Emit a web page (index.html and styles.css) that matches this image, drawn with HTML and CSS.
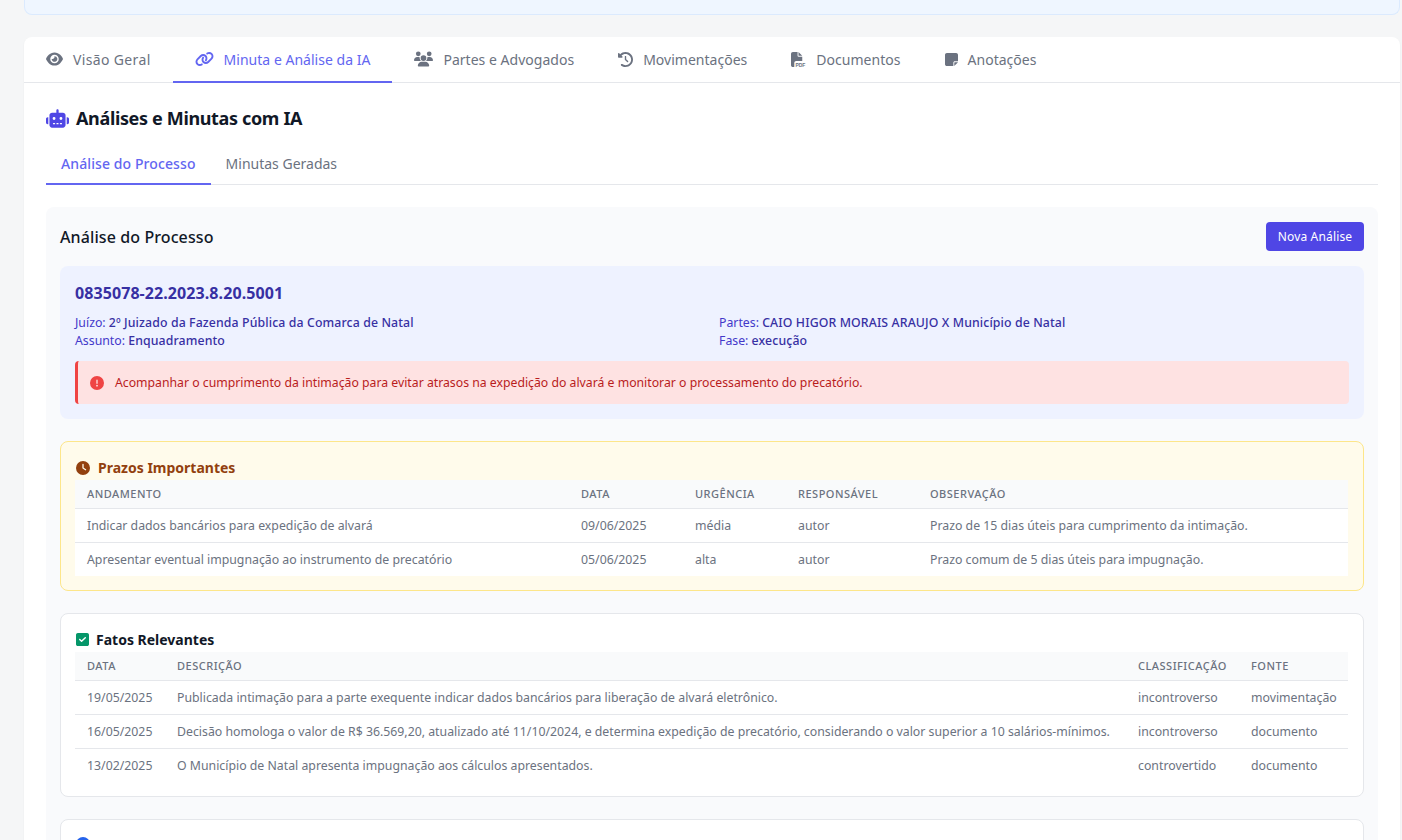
FILE: index.html
```html
<!DOCTYPE html>
<html lang="pt-BR">
<head>
    <meta charset="UTF-8">
    <meta name="viewport" content="width=device-width, initial-scale=1.0">
    <title>Análises e Minutas com IA</title>
    <link rel="stylesheet" href="styles.css">
</head>
<body>
    <div class="top-strip"></div>

    <main class="card">
        <nav class="tabs">
            <a class="tab">
                <svg class="tab-icon" width="17" height="16" viewBox="0 0 576 512"><path d="M288 32c-80.8 0-145.5 36.8-192.6 80.6C48.6 156 17.3 208 2.5 243.7c-3.3 7.9-3.3 16.7 0 24.6C17.3 304 48.6 356 95.4 399.4C142.5 443.2 207.2 480 288 480s145.5-36.8 192.6-80.6c46.8-43.5 78.1-95.4 93-131.1c3.3-7.9 3.3-16.7 0-24.6c-14.9-35.7-46.2-87.7-93-131.1C433.5 68.8 368.8 32 288 32zM144 256a144 144 0 1 1 288 0 144 144 0 1 1 -288 0zm144-64c0 35.3-28.7 64-64 64c-7.1 0-13.9-1.2-20.3-3.3c-5.5-1.8-11.9 1.6-11.7 7.4c.3 6.9 1.3 13.8 3.2 20.7c13.7 51.2 66.4 81.6 117.6 67.9s81.6-66.4 67.9-117.6c-11.1-41.5-47.8-69.4-88.6-71.1c-5.8-.2-9.2 6.1-7.4 11.7c2.1 6.4 3.3 13.2 3.3 20.3z"/></svg>
                Visão Geral
            </a>
            <a class="tab active">
                <svg class="tab-icon" width="19" height="16" viewBox="0 0 640 512"><path d="M579.8 267.7c56.5-56.5 56.5-148 0-204.5c-50-50-128.8-56.5-186.3-15.4l-1.6 1.1c-14.4 10.3-17.7 30.3-7.4 44.6s30.3 17.7 44.6 7.4l1.6-1.1c32.1-22.9 76-19.3 103.8 8.6c31.5 31.5 31.5 82.5 0 114L422.3 334.8c-31.5 31.5-82.5 31.5-114 0c-27.9-27.9-31.5-71.8-8.6-103.8l1.1-1.6c10.3-14.4 6.9-34.4-7.4-44.6s-34.4-6.9-44.6 7.4l-1.1 1.6C206.5 251.2 213 330 263 380c56.5 56.5 148 56.5 204.5 0L579.8 267.7zM60.2 244.3c-56.5 56.5-56.5 148 0 204.5c50 50 128.8 56.5 186.3 15.4l1.6-1.1c14.4-10.3 17.7-30.3 7.4-44.6s-30.3-17.7-44.6-7.4l-1.6 1.1c-32.1 22.9-76 19.3-103.8-8.6C74 372 74 321 105.5 289.5L217.7 177.2c31.5-31.5 82.5-31.5 114 0c27.9 27.9 31.5 71.8 8.6 103.9l-1.1 1.6c-10.3 14.4-6.9 34.4 7.4 44.6s34.4 6.9 44.6-7.4l1.1-1.6C433.5 260.8 427 182 377 132c-56.5-56.5-148-56.5-204.5 0L60.2 244.3z"/></svg>
                Minuta e Análise da IA
            </a>
            <a class="tab">
                <svg class="tab-icon" width="19" height="16" viewBox="0 0 640 512"><path d="M144 0a80 80 0 1 1 0 160A80 80 0 1 1 144 0zM512 0a80 80 0 1 1 0 160A80 80 0 1 1 512 0zM0 298.7C0 239.8 47.8 192 106.7 192h42.7c15.9 0 31 3.5 44.6 9.7c-1.3 7.2-1.9 14.7-1.9 22.3c0 38.2 16.8 72.5 43.3 96c-.2 0-.4 0-.7 0H21.3C9.6 320 0 310.4 0 298.7zM405.3 320c-.2 0-.4 0-.7 0c26.6-23.5 43.3-57.8 43.3-96c0-7.6-.7-15-1.9-22.3c13.6-6.3 28.7-9.7 44.6-9.7h42.7C592.2 192 640 239.8 640 298.7c0 11.8-9.6 21.3-21.3 21.3H405.3zM224 224a96 96 0 1 1 192 0 96 96 0 1 1 -192 0zM128 485.3C128 411.7 187.7 352 261.3 352H378.7C452.3 352 512 411.7 512 485.3c0 14.7-11.9 26.7-26.7 26.7H154.7c-14.7 0-26.7-11.9-26.7-26.7z"/></svg>
                Partes e Advogados
            </a>
            <a class="tab">
                <svg class="tab-icon" width="15" height="15" viewBox="0 0 512 512"><path d="M75 75L41 41C25.9 25.9 0 36.6 0 57.9V168c0 13.3 10.7 24 24 24H134.1c21.4 0 32.1-25.9 17-41l-30.8-30.8C155 85.5 203 64 256 64c106 0 192 86 192 192s-86 192-192 192c-40.8 0-78.6-12.7-109.7-34.4c-14.5-10.1-34.4-6.6-44.6 7.9s-6.6 34.4 7.9 44.6C151.2 495 201.7 512 256 512c141.4 0 256-114.6 256-256S397.4 0 256 0C185.3 0 121.3 28.7 75 75zm181 53c-13.3 0-24 10.7-24 24V256c0 6.4 2.5 12.5 7 17l72 72c9.4 9.4 24.6 9.4 33.9 0s9.4-24.6 0-33.9l-65-65V152c0-13.3-10.7-24-24-24z"/></svg>
                Movimentações
            </a>
            <a class="tab">
                <svg class="tab-icon" width="15" height="15" viewBox="0 0 512 512"><path d="M0 64C0 28.7 28.7 0 64 0H224V128c0 17.7 14.3 32 32 32H384V304H176c-35.3 0-64 28.7-64 64V512H64c-35.3 0-64-28.7-64-64V64zm384 64H256V0L384 128z"/><text x="150" y="500" font-size="170" font-weight="700" font-family="Liberation Sans, sans-serif">PDF</text></svg>
                Documentos
            </a>
            <a class="tab">
                <svg class="tab-icon" width="13" height="15" viewBox="0 0 448 512"><path d="M64 32C28.7 32 0 60.7 0 96V416c0 35.3 28.7 64 64 64H288V368c0-26.5 21.5-48 48-48H448V96c0-35.3-28.7-64-64-64H64zM448 352H402.7 336c-8.8 0-16 7.2-16 16v66.7V480l32-32 64-64 32-32z"/></svg>
                Anotações
            </a>
        </nav>

        <div class="card-body">
            <h2 class="page-title">
                <svg class="robot-icon" width="23" height="19" viewBox="0 0 640 512"><path d="M320 0c17.7 0 32 14.3 32 32V96H472c39.8 0 72 32.2 72 72V440c0 39.8-32.2 72-72 72H168c-39.8 0-72-32.2-72-72V168c0-39.8 32.2-72 72-72H288V32c0-17.7 14.3-32 32-32zM208 384c-8.8 0-16 7.2-16 16s7.2 16 16 16h32c8.8 0 16-7.2 16-16s-7.2-16-16-16H208zm96 0c-8.8 0-16 7.2-16 16s7.2 16 16 16h32c8.8 0 16-7.2 16-16s-7.2-16-16-16H304zm96 0c-8.8 0-16 7.2-16 16s7.2 16 16 16h32c8.8 0 16-7.2 16-16s-7.2-16-16-16H400zM264 256a40 40 0 1 0 -80 0 40 40 0 1 0 80 0zm152 40a40 40 0 1 0 0-80 40 40 0 1 0 0 80zM48 224H64V416H48c-26.5 0-48-21.5-48-48V272c0-26.5 21.5-48 48-48zm544 0c26.5 0 48 21.5 48 48v96c0 26.5-21.5 48-48 48H576V224h16z"/></svg>
                Análises e Minutas com IA
            </h2>

            <div class="subtabs">
                <a class="subtab active">Análise do Processo</a>
                <a class="subtab">Minutas Geradas</a>
            </div>

            <section class="panel">
                <div class="panel-head">
                    <h3>Análise do Processo</h3>
                    <button class="btn-primary">Nova Análise</button>
                </div>

                <div class="process-box">
                    <h4>0835078-22.2023.8.20.5001</h4>
                    <div class="process-info">
                        <div>
                            <p>Juízo: <strong>2º Juizado da Fazenda Pública da Comarca de Natal</strong></p>
                            <p>Assunto: <strong>Enquadramento</strong></p>
                        </div>
                        <div>
                            <p>Partes: <strong>CAIO HIGOR MORAIS ARAUJO X Município de Natal</strong></p>
                            <p>Fase: <strong>execução</strong></p>
                        </div>
                    </div>
                    <div class="alert">
                        <svg width="14" height="14" viewBox="0 0 512 512"><path d="M256 512A256 256 0 1 0 256 0a256 256 0 1 0 0 512zm0-384c13.3 0 24 10.7 24 24V264c0 13.3-10.7 24-24 24s-24-10.7-24-24V152c0-13.3 10.7-24 24-24zM224 352a32 32 0 1 1 64 0 32 32 0 1 1 -64 0z"/></svg>
                        Acompanhar o cumprimento da intimação para evitar atrasos na expedição do alvará e monitorar o processamento do precatório.
                    </div>
                </div>

                <div class="block block-warning">
                    <h4 class="block-title">
                        <svg width="14" height="14" viewBox="0 0 512 512"><path d="M256 0a256 256 0 1 1 0 512A256 256 0 1 1 256 0zM232 120V256c0 8 4 15.5 10.7 20l96 64c11 7.4 25.9 4.4 33.3-6.7s4.4-25.9-6.7-33.3L280 243.2V120c0-13.3-10.7-24-24-24s-24 10.7-24 24z"/></svg>
                        Prazos Importantes
                    </h4>
                    <table>
                        <colgroup>
                            <col class="w-494"><col class="w-114"><col class="w-103"><col class="w-132"><col>
                        </colgroup>
                        <thead>
                            <tr><th>Andamento</th><th>Data</th><th>Urgência</th><th>Responsável</th><th>Observação</th></tr>
                        </thead>
                        <tbody>
                            <tr>
                                <td>Indicar dados bancários para expedição de alvará</td>
                                <td>09/06/2025</td><td>média</td><td>autor</td>
                                <td>Prazo de 15 dias úteis para cumprimento da intimação.</td>
                            </tr>
                            <tr>
                                <td>Apresentar eventual impugnação ao instrumento de precatório</td>
                                <td>05/06/2025</td><td>alta</td><td>autor</td>
                                <td>Prazo comum de 5 dias úteis para impugnação.</td>
                            </tr>
                        </tbody>
                    </table>
                </div>

                <div class="block">
                    <h4 class="block-title">
                        <svg class="check-icon" width="13" height="15" viewBox="0 0 448 512"><path d="M64 32C28.7 32 0 60.7 0 96V416c0 35.3 28.7 64 64 64H384c35.3 0 64-28.7 64-64V96c0-35.3-28.7-64-64-64H64zM337 209L209 337c-9.4 9.4-24.6 9.4-33.9 0l-64-64c-9.4-9.4-9.4-24.6 0-33.9s24.6-9.4 33.9 0l47 47L303 175c9.4-9.4 24.6-9.4 33.9 0s9.4 24.6 0 33.9z"/></svg>
                        Fatos Relevantes
                    </h4>
                    <table>
                        <colgroup>
                            <col class="w-90"><col class="w-961"><col class="w-113"><col>
                        </colgroup>
                        <thead>
                            <tr><th>Data</th><th>Descrição</th><th>Classificação</th><th>Fonte</th></tr>
                        </thead>
                        <tbody>
                            <tr>
                                <td>19/05/2025</td>
                                <td>Publicada intimação para a parte exequente indicar dados bancários para liberação de alvará eletrônico.</td>
                                <td>incontroverso</td><td>movimentação</td>
                            </tr>
                            <tr>
                                <td>16/05/2025</td>
                                <td>Decisão homologa o valor de R$ 36.569,20, atualizado até 11/10/2024, e determina expedição de precatório, considerando o valor superior a 10 salários-mínimos.</td>
                                <td>incontroverso</td><td>documento</td>
                            </tr>
                            <tr>
                                <td>13/02/2025</td>
                                <td>O Município de Natal apresenta impugnação aos cálculos apresentados.</td>
                                <td>controvertido</td><td>documento</td>
                            </tr>
                        </tbody>
                    </table>
                </div>

                <div class="block block-last">
                    <svg class="info-icon" width="14" height="14" viewBox="0 0 512 512"><circle cx="256" cy="256" r="256"/></svg>
                </div>
            </section>
        </div>
    </main>
</body>
</html>
```

FILE: styles.css
```css
* {
    box-sizing: border-box;
}
html, body {
    height: 840px;
    overflow: hidden;
}
body {
    margin: 0;
    padding: 0 2px 0 24px;
    background-color: #f5f6f7;
    font-family: 'Noto Sans', sans-serif;
    font-size: 12px;
    color: #111827;
}
.top-strip {
    height: 15px;
    background-color: #eff6ff;
    border: 1px solid #dbeafe;
    border-top: none;
    border-radius: 0 0 8px 8px;
    margin-bottom: 22px;
}
.card {
    background-color: #fff;
    border-radius: 8px;
    box-shadow: 0 1px 2px rgba(0,0,0,0.05);
}
.tabs {
    display: flex;
    height: 46px;
    border-bottom: 1px solid #e5e7eb;
}
.tab {
    display: flex;
    align-items: center;
    padding: 0 22px;
    font-size: 14px;
    letter-spacing: 0.02px;
    color: #6b7280;
    border-bottom: 2px solid transparent;
    margin-bottom: -1px;
}
.tab:first-child {
    letter-spacing: 0.35px;
}
.tab.active {
    color: #6366f1;
    border-bottom-color: #6366f1;
}
.tab-icon {
    fill: currentColor;
    margin-right: 10px;
}
.card-body {
    padding: 23px 22px 24px;
}
.page-title {
    display: flex;
    align-items: center;
    gap: 7px;
    margin: 0;
    font-size: 18px;
    line-height: 24px;
    font-weight: 700;
    letter-spacing: -0.35px;
}
.robot-icon {
    fill: #4f46e5;
}
.subtabs {
    display: flex;
    margin-top: 15px;
    margin-bottom: 22px;
    border-bottom: 1px solid #e5e7eb;
}
.subtab {
    padding: 0 15px;
    height: 40px;
    line-height: 38px;
    font-size: 14px;
    color: #6b7280;
    border-bottom: 2px solid transparent;
    margin-bottom: -1px;
}
.subtab.active {
    color: #6366f1;
    font-weight: 500;
    letter-spacing: 0.1px;
    border-bottom-color: #6366f1;
}
.panel {
    background-color: #f9fafc;
    border-radius: 8px;
    padding: 15px 14px;
}
.panel-head {
    display: flex;
    justify-content: space-between;
    align-items: center;
    margin-bottom: 15px;
}
.panel-head h3 {
    margin: 0;
    font-size: 16px;
    font-weight: 500;
    letter-spacing: 0.1px;
}
.btn-primary {
    width: 98px;
    height: 29px;
    border: none;
    border-radius: 4px;
    background-color: #4f46e5;
    color: #fff;
    font-family: inherit;
    font-size: 12px;
    letter-spacing: 0.15px;
}
.process-box {
    background-color: #eef2ff;
    border-radius: 8px;
    padding: 15px;
    height: 153px;
    margin-bottom: 22px;
}
.process-box h4 {
    margin: 0 0 9px;
    font-size: 16px;
    line-height: 24px;
    font-weight: 700;
    letter-spacing: 0.08px;
    color: #3730a3;
}
.process-info {
    display: grid;
    grid-template-columns: 644px 1fr;
    font-size: 12.3px;
    line-height: 18px;
    color: #4338ca;
}
.process-info p {
    margin: 0;
}
.process-info strong {
    font-weight: 500;
    letter-spacing: 0.12px;
    color: #3730a3;
}
.alert {
    display: flex;
    align-items: center;
    gap: 11px;
    height: 43px;
    margin-top: 11px;
    padding-left: 12px;
    background-color: #fee2e2;
    border-left: 3px solid #ef4444;
    border-radius: 4px;
    font-size: 12.25px;
    color: #b91c1c;
}
.alert svg {
    fill: #ef4444;
}
.block {
    background-color: #fff;
    border: 1px solid #e5e7eb;
    border-radius: 8px;
    padding: 15px 15px 14px 14px;
    margin-bottom: 22px;
}
.block-warning {
    background-color: #fffbeb;
    border-color: #fde68a;
}
.block-warning .block-title {
    gap: 8px;
    color: #92400e;
}
.block-warning .block-title svg {
    fill: #92400e;
}
.block-title {
    display: flex;
    align-items: center;
    gap: 7px;
    margin: 0;
    padding: 0 0 2px 1px;
    height: 23px;
    font-size: 14px;
    font-weight: 700;
}
.block-last {
    height: 60px;
    padding-top: 17px;
    padding-left: 15px;
}
.check-icon {
    fill: #059669;
}
.info-icon {
    fill: #2563eb;
}
table {
    width: 100%;
    border-collapse: collapse;
    table-layout: fixed;
    background-color: #fff;
}
th {
    height: 28px;
    padding: 0 12px;
    text-align: left;
    background-color: #f9fafb;
    border-bottom: 1px solid #e5e7eb;
    font-size: 11px;
    font-weight: 500;
    letter-spacing: 0.5px;
    text-transform: uppercase;
    color: #6b7280;
}
td {
    height: 34px;
    padding: 0 12px;
    border-bottom: 1px solid #e5e7eb;
    font-size: 12.3px;
    color: #6b7280;
    white-space: nowrap;
}
tr:last-child td {
    border-bottom: none;
}
.w-494 { width: 494px; }
.w-114 { width: 114px; }
.w-103 { width: 103px; }
.w-132 { width: 132px; }
.w-90 { width: 90px; }
.w-961 { width: 961px; }
.w-113 { width: 113px; }
```
